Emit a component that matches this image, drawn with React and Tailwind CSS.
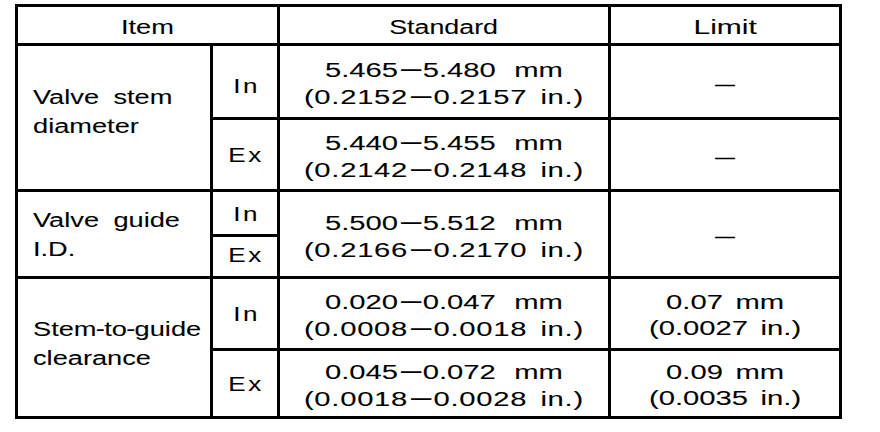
import React from "react";

const F = { fontFamily: '"Liberation Sans", Arial, sans-serif' };

function Cell({ className = "", children }) {
  return (
    <div className={`bg-white flex items-center justify-center text-center ${className}`}>
      {children}
    </div>
  );
}

function D() {
  return <span className="inline-block text-[25px] leading-none ml-[2px] mr-[1px]">–</span>;
}

function Line({ parts, cls }) {
  return (
    <div className={`whitespace-nowrap ${cls}`}>
      {parts[0]}
      <D />
      {parts[1]}
    </div>
  );
}

function Val({ a, b }) {
  return (
    <div className="inline-block scale-x-[1.46] text-[20px] leading-[26px] text-black pt-[3px]">
      {Array.isArray(a) ? (
        <Line parts={a} cls="[word-spacing:7px]" />
      ) : (
        <div className="whitespace-nowrap [word-spacing:3px]">{a}</div>
      )}
      {Array.isArray(b) ? (
        <Line parts={b} cls="[word-spacing:3px] tracking-[0.5px]" />
      ) : (
        <div className="whitespace-nowrap [word-spacing:3px]">{b}</div>
      )}
    </div>
  );
}

function Label({ children }) {
  return (
    <div className="w-full pl-[15px] text-left">
      <div className="inline-block origin-left scale-x-[1.36] text-[20px] leading-[29px] text-black whitespace-nowrap [word-spacing:5px]">
        {children}
      </div>
    </div>
  );
}

function Sub({ children }) {
  return (
    <span className="inline-block scale-x-[1.3] text-[20px] tracking-[2px] pl-[2px] text-black">
      {children}
    </span>
  );
}

function Dash() {
  return <span className="text-[20px] leading-[20px] text-black pt-[4px]">—</span>;
}

function H({ children }) {
  return <span className="inline-block -mx-[0.5px]">{children}</span>;
}

export default function App() {
  return (
    <div
      className="w-[880px] h-[432px] bg-white pl-[15px] pt-[4px] text-black [-webkit-text-stroke:0.08px_black]"
      style={F}
    >
      <div className="grid grid-cols-[192px_64px_328px_228px] grid-rows-[36px_71px_69px_42px_39px_69px_65px] gap-[3px] p-[3px] bg-black w-max">
        {/* header */}
        <Cell className="col-span-2 pt-[3px]">
          <span className="inline-block scale-x-[1.36] text-[20px]">Item</span>
        </Cell>
        <Cell className="pt-[3px]">
          <span className="inline-block scale-x-[1.34] text-[20px]">Standard</span>
        </Cell>
        <Cell className="pt-[3px]">
          <span className="inline-block scale-x-[1.5] text-[20px]">Limit</span>
        </Cell>

        {/* Valve stem diameter */}
        <Cell className="row-span-2 pb-[12px]">
          <Label>
            Valve stem
            <br />
            diameter
          </Label>
        </Cell>
        <Cell className="pt-[8px]">
          <Sub>In</Sub>
        </Cell>
        <Cell>
          <Val a={["5.465", "5.480 mm"]} b={["(0.2152", "0.2157 in.)"]} />
        </Cell>
        <Cell>
          <Dash />
        </Cell>
        <Cell>
          <Sub>Ex</Sub>
        </Cell>
        <Cell>
          <Val a={["5.440", "5.455 mm"]} b={["(0.2142", "0.2148 in.)"]} />
        </Cell>
        <Cell>
          <Dash />
        </Cell>

        {/* Valve guide I.D. */}
        <Cell className="row-span-2 pt-[2px]">
          <Label>
            Valve guide
            <br />
            I.D.
          </Label>
        </Cell>
        <Cell className="pt-[2px]">
          <Sub>In</Sub>
        </Cell>
        <Cell className="row-span-2">
          <Val a={["5.500", "5.512 mm"]} b={["(0.2166", "0.2170 in.)"]} />
        </Cell>
        <Cell className="row-span-2">
          <Dash />
        </Cell>
        <Cell className="pb-[4px]">
          <Sub>Ex</Sub>
        </Cell>

        {/* Stem-to-guide clearance */}
        <Cell className="row-span-2 pb-[8px]">
          <Label>
            Stem
            <H>-</H>to
            <H>-</H>guide
            <br />
            clearance
          </Label>
        </Cell>
        <Cell>
          <Sub>In</Sub>
        </Cell>
        <Cell>
          <Val a={["0.020", "0.047 mm"]} b={["(0.0008", "0.0018 in.)"]} />
        </Cell>
        <Cell>
          <Val a="0.07 mm" b="(0.0027 in.)" />
        </Cell>
        <Cell>
          <Sub>Ex</Sub>
        </Cell>
        <Cell>
          <Val a={["0.045", "0.072 mm"]} b={["(0.0018", "0.0028 in.)"]} />
        </Cell>
        <Cell>
          <Val a="0.09 mm" b="(0.0035 in.)" />
        </Cell>
      </div>
    </div>
  );
}
